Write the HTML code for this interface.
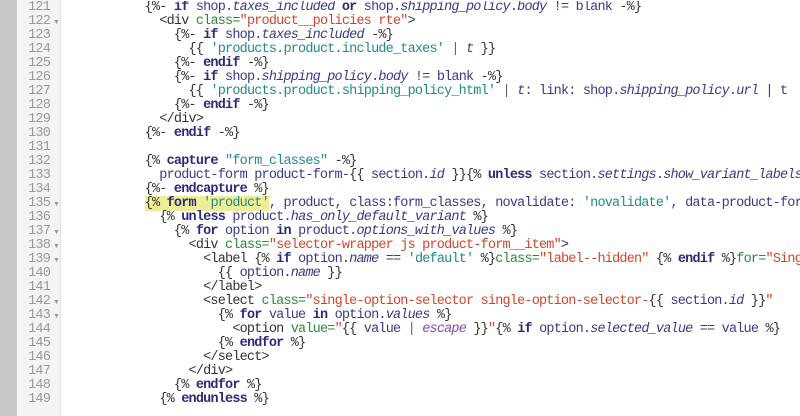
<!DOCTYPE html>
<html><head><meta charset="utf-8"><style>
html,body{margin:0;padding:0;width:800px;height:416px;overflow:hidden;background:#fff}
.wrap{position:absolute;left:0;top:0;width:800px;height:416px;overflow:hidden}
.strip{position:absolute;left:0;top:0;width:17px;height:416px;background:#c8c8c8}
.gut{position:absolute;left:17px;top:0;width:43px;height:416px;background:#f4f4f4;border-right:1px solid #e2e2e2}
.ln{position:absolute;left:17px;width:33px;text-align:right;font:13.5px "Liberation Mono",monospace;letter-spacing:-0.8px;color:#9a9a9a;line-height:14px;white-space:pre}
.fa{position:absolute;left:53px;font-size:7px;color:#999;line-height:14px}
.code{position:absolute;left:71.7px;top:1px;width:730px;overflow:hidden;font:13.5px/14px "Liberation Mono",monospace;letter-spacing:-0.8px;color:#3a3a88;white-space:pre}
.b{color:#333}.k{font-weight:bold;color:#2e2a7a}.s{color:#218a8a}.i{font-style:italic}
.t{color:#333}.a{color:#2a8a3a}.v{color:#d2452a}.p{color:#666}
.hl{background:#eeee99}
</style></head><body><div class="wrap">
<div class="strip"></div><div class="gut"></div>
<div class="ln" style="top:1px">121
122
123
124
125
126
127
128
129
130
131
132
133
134
135
136
137
138
139
140
141
142
143
144
145
146
147
148
149</div>
<div class="fa" style="top:15px">▼</div>
<div class="fa" style="top:197px">▼</div>
<div class="fa" style="top:225px">▼</div>
<div class="fa" style="top:239px">▼</div>
<div class="fa" style="top:253px">▼</div>
<div class="fa" style="top:295px">▼</div>
<div class="fa" style="top:309px">▼</div>
<div class="code">          <span class="b">{%-</span> <span class="k">if</span> shop.<span class="i">taxes_included</span> <span class="k">or</span> shop.<span class="i">shipping_policy</span>.<span class="i">body</span> != blank <span class="b">-%}</span>
            <span class="t">&lt;div</span> <span class="a">class=</span><span class="v">"product__policies rte"</span><span class="t">&gt;</span>
              <span class="b">{%-</span> <span class="k">if</span> shop.<span class="i">taxes_included</span> <span class="b">-%}</span>
                <span class="b">{{</span> <span class="s">'products.product.include_taxes'</span> <span class="p">|</span> <span class="i">t</span> <span class="b">}}</span>
              <span class="b">{%-</span> <span class="k">endif</span> <span class="b">-%}</span>
              <span class="b">{%-</span> <span class="k">if</span> shop.<span class="i">shipping_policy</span>.<span class="i">body</span> != blank <span class="b">-%}</span>
                <span class="b">{{</span> <span class="s">'products.product.shipping_policy_html'</span> <span class="p">|</span> <span class="i">t</span>: link: shop.<span class="i">shipping_policy</span>.<span class="i">url</span> | t
              <span class="b">{%-</span> <span class="k">endif</span> <span class="b">-%}</span>
            <span class="t">&lt;/div&gt;</span>
          <span class="b">{%-</span> <span class="k">endif</span> <span class="b">-%}</span>

          <span class="b">{%</span> <span class="k">capture</span> <span class="s">"form_classes"</span> <span class="b">-%}</span>
            product-form product-form-<span class="b">{{</span> section.<span class="i">id</span> <span class="b">}}{%</span> <span class="k">unless</span> section.<span class="i">settings</span>.<span class="i">show_variant_labels</span>
          <span class="b">{%-</span> <span class="k">endcapture</span> <span class="b">%}</span>
          <span class="hl"><span class="b">{%</span> <span class="k">form</span> <span class="s">'product'</span></span>, product, class:form_classes, novalidate: <span class="s">'novalidate'</span>, data-product-form: ''
            <span class="b">{%</span> <span class="k">unless</span> product.<span class="i">has_only_default_variant</span> <span class="b">%}</span>
              <span class="b">{%</span> <span class="k">for</span> option <span class="k">in</span> product.<span class="i">options_with_values</span> <span class="b">%}</span>
                <span class="t">&lt;div</span> <span class="a">class=</span><span class="v">"selector-wrapper js product-form__item"</span><span class="t">&gt;</span>
                  <span class="t">&lt;label</span> <span class="b">{%</span> <span class="k">if</span> option.<span class="i">name</span> == <span class="s">'default'</span> <span class="b">%}</span><span class="a">class=</span><span class="v">"label--hidden"</span> <span class="b">{%</span> <span class="k">endif</span> <span class="b">%}</span><span class="a">for=</span><span class="v">"SingleOption</span>
                    <span class="b">{{</span> option.<span class="i">name</span> <span class="b">}}</span>
                  <span class="t">&lt;/label&gt;</span>
                  <span class="t">&lt;select</span> <span class="a">class=</span><span class="v">"single-option-selector single-option-selector-</span><span class="b">{{</span> section.<span class="i">id</span> <span class="b">}}</span><span class="v">"</span>
                    <span class="b">{%</span> <span class="k">for</span> value <span class="k">in</span> option.<span class="i">values</span> <span class="b">%}</span>
                      <span class="t">&lt;option</span> <span class="a">value=</span><span class="v">"</span><span class="b">{{</span> value <span class="p">|</span> <span class="i" style="color:#8a4ab0">escape</span> <span class="b">}}</span><span class="v">"</span><span class="b">{%</span> <span class="k">if</span> option.<span class="i">selected_value</span> == value <span class="b">%}</span>
                    <span class="b">{%</span> <span class="k">endfor</span> <span class="b">%}</span>
                  <span class="t">&lt;/select&gt;</span>
                <span class="t">&lt;/div&gt;</span>
              <span class="b">{%</span> <span class="k">endfor</span> <span class="b">%}</span>
            <span class="b">{%</span> <span class="k">endunless</span> <span class="b">%}</span></div>
</div></body></html>
